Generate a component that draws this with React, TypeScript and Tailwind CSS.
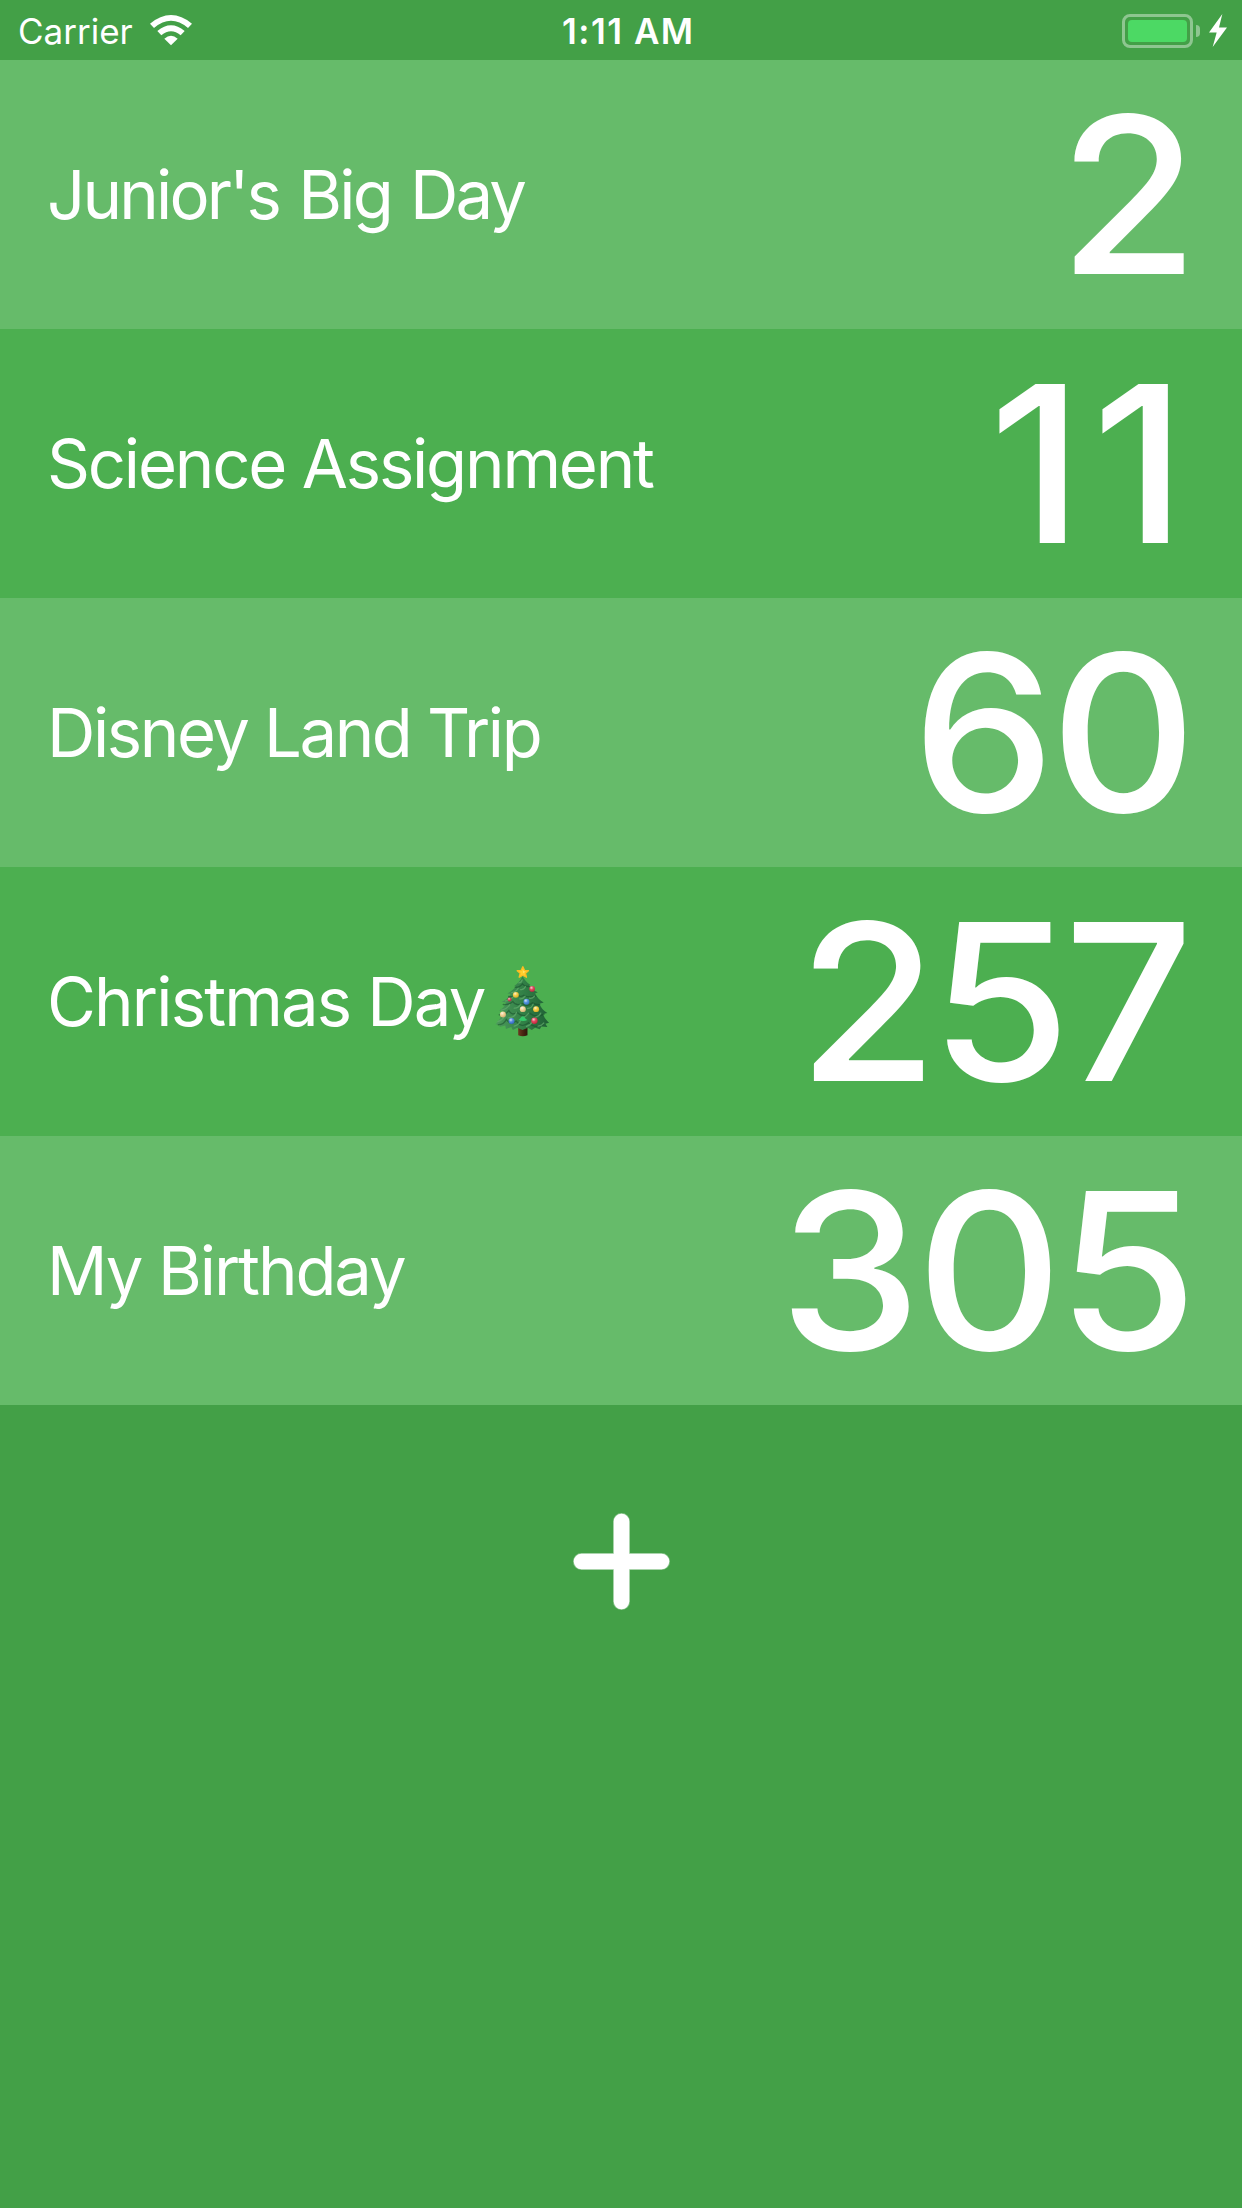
type CountdownItem = {
  name: string;
  days: string;
  row: string;
  label: string;
  count: string;
  tree?: boolean;
};

const items: CountdownItem[] = [
  { name: "Junior's Big Day", days: "2", row: "bg-[#66bb6a] pr-[44px]", label: "tracking-[-2.8px] [word-spacing:3px]", count: "" },
  { name: "Science Assignment", days: "11", row: "bg-[#4caf50] pr-[47px]", label: "tracking-[-2.2px]", count: "tracking-[8.5px]" },
  { name: "Disney Land Trip", days: "60", row: "bg-[#66bb6a] pr-[50px]", label: "tracking-[-2.4px]", count: "tracking-[-4.6px]" },
  { name: "Christmas Day", days: "257", row: "bg-[#4caf50] pr-[55px]", label: "tracking-[-1.85px]", count: "tracking-[-6.7px]", tree: true },
  { name: "My Birthday", days: "305", row: "bg-[#66bb6a] pr-[50px]", label: "tracking-[-2.1px]", count: "tracking-[-4.9px]" },
];

const ornaments = [
  { x: 159, y: 117, r: 8.5, c: "#d9304a" },
  { x: 110, y: 135, r: 9, c: "#f2c62f" },
  { x: 91, y: 149, r: 6, c: "#d02f45" },
  { x: 142, y: 156, r: 9, c: "#3f86dc" },
  { x: 131, y: 178, r: 9, c: "#efcf8a" },
  { x: 171, y: 178, r: 9, c: "#f4c62c" },
  { x: 71, y: 194, r: 9, c: "#f0cb85" },
  { x: 97, y: 214, r: 9, c: "#3c78d8" },
  { x: 166, y: 213, r: 9.5, c: "#dd2c48" },
];

function ChristmasTree() {
  return (
    <svg role="img" aria-label="Christmas tree" viewBox="45 45 170 220" className="ml-[10px] h-[73px] w-[57px] shrink-0">
      <defs>
        <linearGradient id="trunk" x1="0" x2="1">
          <stop offset="0" stopColor="#6b3b20" />
          <stop offset="0.5" stopColor="#4a2412" />
          <stop offset="1" stopColor="#2c150b" />
        </linearGradient>
        <linearGradient id="needles" x1="0" x2="1">
          <stop offset="0" stopColor="#4d9a5c" />
          <stop offset="0.5" stopColor="#338147" />
          <stop offset="1" stopColor="#1f5f35" />
        </linearGradient>
        <radialGradient id="shine" cx="0.38" cy="0.3" r="0.7">
          <stop offset="0" stopColor="#fff" stopOpacity="0.75" />
          <stop offset="0.5" stopColor="#fff" stopOpacity="0.1" />
          <stop offset="1" stopColor="#000" stopOpacity="0.15" />
        </radialGradient>
      </defs>
      <path d="M117 225h28v32q-14 6-28 0z" fill="url(#trunk)" />
      <path
        d="M130 78C124 92 116 101 105 108L111 110C102 120 94 126 84 131L95 132C88 144 78 151 67 156L80 158C77 169 70 177 59 182L72 184C68 199 60 212 48 224L62 224 60 232 78 227 80 238 96 232 101 241 114 234 130 241 146 234 158 241 168 234 182 239 187 230 205 232 199 222 210 219C200 210 195 202 192 193L205 190C194 183 186 175 181 162L194 158C182 152 174 143 168 131L176 127C162 121 154 114 150 106L154 105C142 97 135 88 130 78Z"
        fill="url(#needles)"
      />
      <g fill="none" strokeLinecap="round">
        <path d="M108 112q14 1 22-10 7 10 20 7M88 140q15 3 26-8 8 13 20 4 12 8 36 3M72 164q18 2 29-9 9 15 28 6 17 13 31-2 13 8 22 5M60 195q18 3 29-13 8 17 25 6 20 19 37 2 20 16 44 3M57 225q17 0 24-16 13 19 30 5 17 23 37 5 18 18 44 6" stroke="#174d2c" strokeWidth="4" opacity="0.55" />
        <path d="M119 99q8 0 10-9M98 128q13-2 19-13M124 119q10 2 15-9M79 153q16-2 26-15M122 147q9 2 16-8M151 145q8 2 15-6M66 181q16-2 25-16M105 175q12 1 20-12M145 176q13 0 17-13M56 216q16-6 22-20M89 204q16 0 23-16M127 205q13-3 22-15M170 202q11-2 15-12M105 229q14-3 19-16M142 230q12-3 18-15M177 229q12-2 17-9" stroke="#62aa6c" strokeWidth="4" opacity="0.75" />
      </g>
      <path d="M122 207q9-16 18 1l5 3q-14 6-27-1z" fill="#35c96a" />
      {ornaments.map((o) => (
        <g key={`${o.x}-${o.y}`}>
          <circle cx={o.x} cy={o.y} r={o.r} fill={o.c} />
          <circle cx={o.x} cy={o.y} r={o.r} fill="url(#shine)" />
        </g>
      ))}
      <path d="M131 50l5 11 12 1-9 8 3 12-11-6-11 6 3-12-9-8 12-1z" fill="#ffd02e" stroke="#fbbb22" strokeWidth="4" strokeLinejoin="round" />
      <path d="M131 56l2 8 6 1-7 4z" fill="#ffe777" />
    </svg>
  );
}

function WifiIcon() {
  return (
    <svg viewBox="0 0 126 93" className="ml-[17px] h-[31px] w-[42px]" fill="#fff">
      <path d="M0 26Q63-26 126 26L114 39Q63-4 12 39Z" />
      <path d="M22 48Q63 13 104 48L92 61Q63 37 34 61Z" />
      <path d="M43 71Q63 54 83 71L63 91Z" />
    </svg>
  );
}

function StatusBar() {
  return (
    <header className="grid h-[60px] grid-cols-[562px_1fr_120px] text-[35px] leading-[60px]">
      <div className="flex items-center pl-[18px]">
        <span className="pt-px">Carrier</span>
        <WifiIcon />
      </div>
      <time className="pt-px font-semibold tracking-[1.5px] whitespace-nowrap">1:11 AM</time>
      <div className="flex items-center">
        <div className="flex h-[34px] w-[71px] rounded-[8px] border-[3px] border-white/40 p-[3px]">
          <div className="flex-1 rounded-[4px] bg-[#4cd964]" />
        </div>
        <div className="ml-[3px] h-[12px] w-[4px] rounded-r-full bg-white/40" />
        <svg viewBox="0 0 54 96" preserveAspectRatio="none" className="ml-[9px] h-[33px] w-[18px]" fill="#fff">
          <path d="M40 0 0 54H23L11 96 54 39H30Z" />
        </svg>
      </div>
    </header>
  );
}

export default function App() {
  return (
    <main className="flex h-[2208px] w-[1242px] flex-col overflow-hidden bg-[#43a047] font-['Inter',sans-serif] text-white">
      <StatusBar />
      <ul>
        {items.map((item) => (
          <li key={item.name} className={`flex h-[269px] items-center justify-between pl-[47px] leading-[269px] whitespace-nowrap ${item.row}`}>
            <div className="flex items-center">
              <span className={`text-[67px] ${item.label}`}>{item.name}</span>
              {item.tree && <ChristmasTree />}
            </div>
            <span className={`origin-right translate-y-px scale-x-[1.04] text-[218px] font-medium ${item.count}`}>{item.days}</span>
          </li>
        ))}
      </ul>
      <button aria-label="Add countdown" className="mt-[108px] self-center">
        <svg viewBox="0 0 97 97" className="h-[97px] w-[97px]" strokeLinecap="round">
          <path d="M48.5 8.5V88.5M8.5 48.5H88.5" stroke="#8cc68f" strokeWidth="17" />
          <path d="M48.5 8.5V88.5M8.5 48.5H88.5" stroke="#fff" strokeWidth="15.5" />
        </svg>
      </button>
    </main>
  );
}
